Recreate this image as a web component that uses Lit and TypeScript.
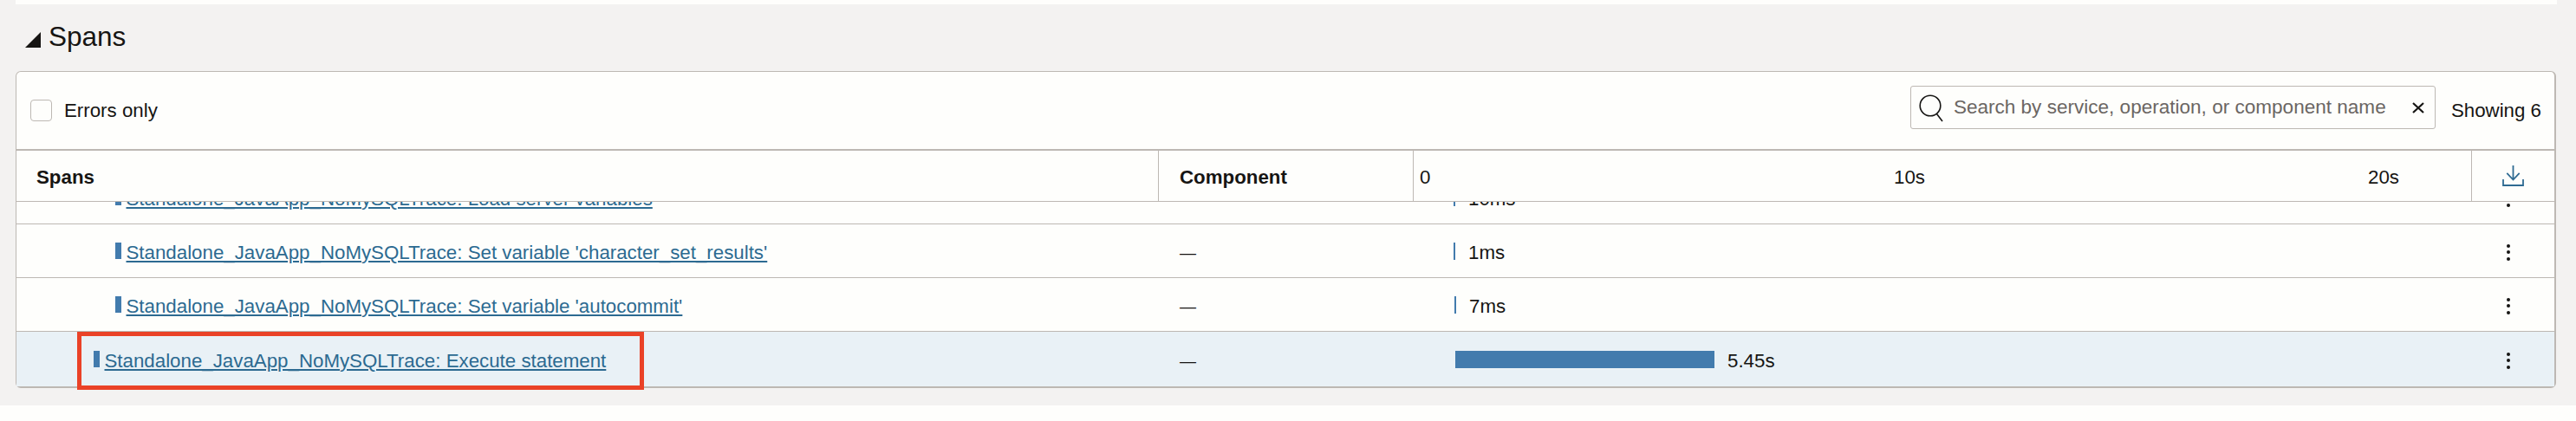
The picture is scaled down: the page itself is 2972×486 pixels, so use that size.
import { LitElement, html, css, svg } from "lit";
import { customElement } from "lit/decorators.js";

interface SpanRow {
  name: string;
  indent: number;
  duration: string;
  barLeft: number;
  barWidth: number;
  selected?: boolean;
}

const ROWS: SpanRow[] = [
  { name: "Standalone_JavaApp_NoMySQLTrace: Load server variables", indent: 114, duration: "10ms", barLeft: 46, barWidth: 2 },
  { name: "Standalone_JavaApp_NoMySQLTrace: Set variable 'character_set_results'", indent: 114, duration: "1ms", barLeft: 46, barWidth: 2 },
  { name: "Standalone_JavaApp_NoMySQLTrace: Set variable 'autocommit'", indent: 114, duration: "7ms", barLeft: 47, barWidth: 2 },
  { name: "Standalone_JavaApp_NoMySQLTrace: Execute statement", indent: 89, duration: "5.45s", barLeft: 48, barWidth: 299, selected: true },
];

const searchIcon = svg`<path d="M13 1.2a11.8 11.8 0 1 0 0 23.6a11.8 11.8 0 0 0 0-23.6zM20.5 22.5L27 31" fill="none" stroke="#161513" stroke-width="1.6"/>`;
const closeIcon = svg`<path d="M1 1L13 12M13 1L1 12" fill="none" stroke="#161513" stroke-width="2.2"/>`;
const downloadIcon = svg`<path d="M12.5 0V16.5M5.3 8.8L12.5 16.5L19.7 8.8M1 16V23H24V16" fill="none" stroke="#2f6b92" stroke-width="1.8"/>`;

@customElement("app-root")
export class AppRoot extends LitElement {
  static styles = css`
    :host {
      display: flex;
      flex-direction: column;
      width: 2972px;
      height: 486px;
      background: #f3f2f1;
      color: #161513;
      font-family: "Liberation Sans", Arial, sans-serif;
      font-size: 22.3px;
      overflow: hidden;
    }
    .top-strip {
      height: 5px;
      margin: 0 22px 0 18px;
      background: #fefefc;
    }
    .heading {
      display: flex;
      align-items: flex-end;
      height: 77px;
      padding: 0 0 0 29px;
      box-sizing: border-box;
    }
    .heading svg {
      margin-bottom: 27px;
    }
    .heading h2 {
      margin: 0 0 22px 9px;
      font-size: 31.5px;
      font-weight: 400;
      line-height: 36px;
    }
    .panel {
      position: relative;
      display: flex;
      flex-direction: column;
      height: 366px;
      margin: 0 23px 0 18px;
      box-sizing: border-box;
      border: 1px solid #bdb8b3;
      border-left-width: 1.5px;
      border-right-width: 2px;
      border-bottom-width: 2px;
      border-radius: 6px;
      background: #fefefc;
    }
    .toolbar {
      display: flex;
      align-items: center;
      height: 89px;
      flex: none;
      padding: 0 15px 0 16px;
    }
    .checkbox {
      width: 25px;
      height: 25px;
      box-sizing: border-box;
      border: 1px solid #bdb8b3;
      border-radius: 4px;
      margin-right: 14px;
    }
    .spacer {
      flex: 1;
    }
    .search {
      display: flex;
      align-items: center;
      width: 606px;
      height: 50px;
      box-sizing: border-box;
      border: 1px solid #bdb8b3;
      border-radius: 3px;
      padding: 0 12px 0 9px;
      margin: 0 18px 7px 0;
      color: #6b6663;
    }
    .search .icon {
      margin: 2px 12px 0 0;
    }
    .search .placeholder {
      flex: 1;
      font-size: 22.55px;
    }
    .row,
    .head {
      display: grid;
      grid-template-columns: 1318px 294px 1221px 1fr;
    }
    .head {
      height: 61px;
      flex: none;
      box-sizing: border-box;
      border-top: 2px solid #bdb8b3;
      border-bottom: 1px solid #bdb8b3;
      font-weight: 700;
    }
    .head > div {
      display: flex;
      align-items: center;
      padding-top: 3px;
      box-sizing: border-box;
      border-right: 1px solid #bdb8b3;
    }
    .head > div:last-child {
      border-right: none;
      justify-content: center;
      padding-top: 0;
    }
    .head .spans-col {
      padding-left: 23px;
    }
    .head .comp-col {
      padding-left: 24px;
    }
    .head .time-col {
      padding-left: 7px;
      font-weight: 400;
    }
    .tick {
      width: 547px;
    }
    .body {
      flex: 1;
      min-height: 0;
      display: flex;
      flex-direction: column;
      justify-content: flex-end;
      overflow: hidden;
    }
    .row {
      flex: none;
      height: 62px;
      box-sizing: border-box;
      border-bottom: 1px solid #bdb8b3;
      align-items: center;
    }
    .row:last-child {
      border-bottom: none;
      height: 63px;
    }
    .row.selected {
      background: #e9f1f6;
    }
    .span-cell {
      display: flex;
      align-items: center;
      gap: 5.5px;
    }
    .marker {
      width: 7px;
      height: 19px;
      background: #427bad;
    }
    .span-cell a {
      margin-top: 4px;
      color: #2c6a91;
      line-height: 24px;
      text-decoration: underline;
      text-decoration-thickness: 2px;
      text-underline-offset: 2px;
    }
    .dash {
      padding-left: 24px;
      font-size: 19px;
      margin-top: 4px;
    }
    .time-cell {
      display: flex;
      align-items: center;
      gap: 15px;
    }
    .bar {
      height: 20px;
      background: #427bad;
    }
    .time-cell span {
      margin-top: 5px;
      line-height: 24px;
    }
    .kebab {
      display: flex;
      flex-direction: column;
      gap: 3.5px;
      width: 4px;
      margin: 3px 0 0 40px;
    }
    .kebab i {
      display: block;
      width: 4px;
      height: 4px;
      border-radius: 50%;
      background: #161513;
    }
    .callout {
      position: absolute;
      left: 70px;
      bottom: -4px;
      width: 654px;
      height: 67px;
      box-sizing: border-box;
      border: 5px solid #ea4227;
      pointer-events: none;
    }
    .bottom-strip {
      height: 18px;
      margin-top: auto;
      background: #fefefc;
    }
  `;

  private renderRow(r: SpanRow) {
    return html`
      <div class="row ${r.selected ? "selected" : ""}">
        <div class="span-cell" style="padding-left:${r.indent}px">
          <span class="marker"></span>
          <a href="#">${r.name}</a>
        </div>
        <div class="dash">—</div>
        <div class="time-cell" style="padding-left:${r.barLeft}px">
          <div class="bar" style="width:${r.barWidth}px"></div>
          <span>${r.duration}</span>
        </div>
        <div class="kebab"><i></i><i></i><i></i></div>
      </div>
    `;
  }

  render() {
    return html`
      <div class="top-strip"></div>
      <div class="heading">
        <svg width="18" height="18" viewBox="0 0 18 18"><path d="M18 0V18H0Z" fill="#161513" /></svg>
        <h2>Spans</h2>
      </div>
      <div class="panel">
        <div class="toolbar">
          <div class="checkbox"></div>
          <span>Errors only</span>
          <div class="spacer"></div>
          <div class="search">
            <svg class="icon" width="28" height="32" viewBox="0 0 28 32">${searchIcon}</svg>
            <span class="placeholder">Search by service, operation, or component name</span>
            <svg width="14" height="13" viewBox="0 0 14 13">${closeIcon}</svg>
          </div>
          <span>Showing 6</span>
        </div>
        <div class="head">
          <div class="spans-col">Spans</div>
          <div class="comp-col">Component</div>
          <div class="time-col">
            <span class="tick">0</span><span class="tick">10s</span><span>20s</span>
          </div>
          <div>
            <svg width="25" height="24" viewBox="0 0 25 24">${downloadIcon}</svg>
          </div>
        </div>
        <div class="body">${ROWS.map((r) => this.renderRow(r))}</div>
        <div class="callout"></div>
      </div>
      <div class="bottom-strip"></div>
    `;
  }
}
